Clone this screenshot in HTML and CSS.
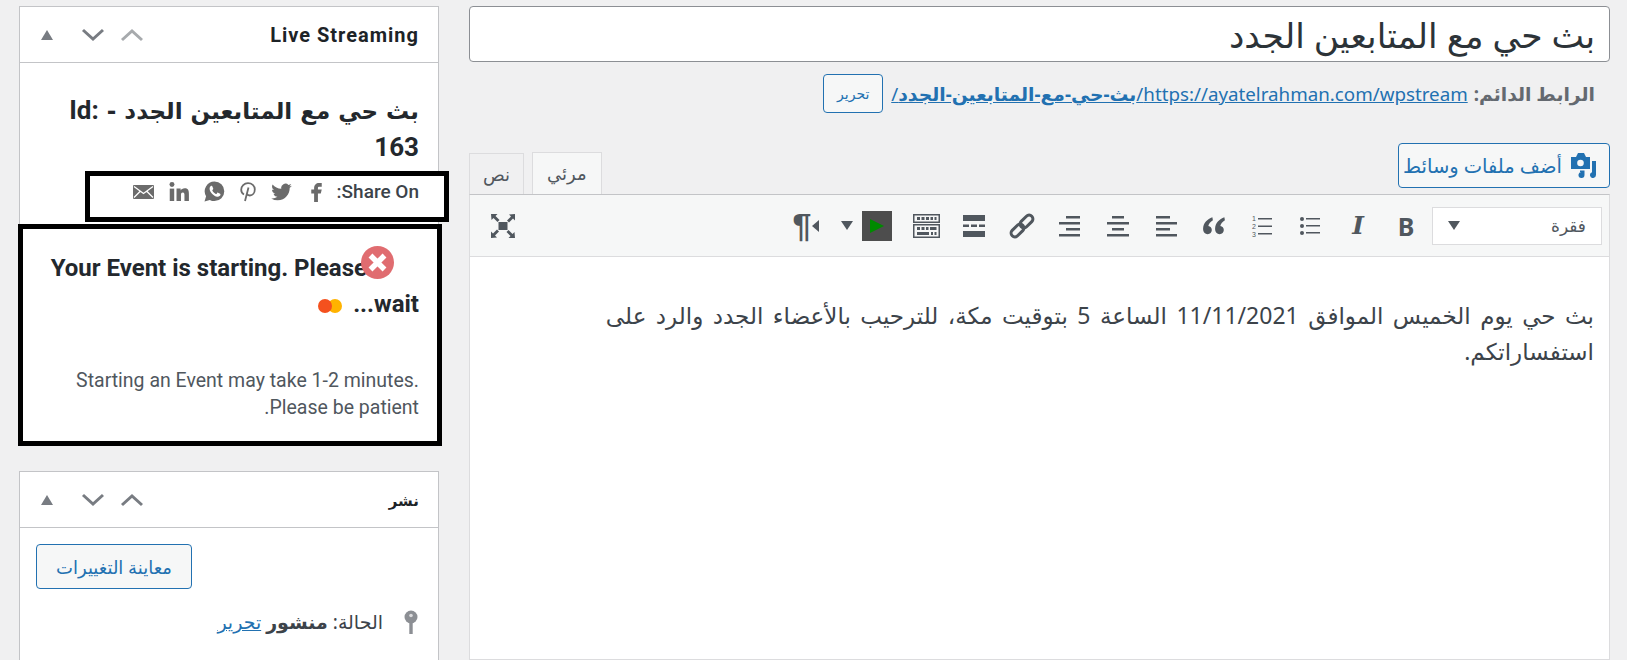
FILE: index.html
```html
<!DOCTYPE html>
<html lang="ar" dir="rtl">
<head>
    <meta charset="UTF-8">
    <title>تحرير البث</title>
    <link rel="stylesheet" href="styles.css">
</head>
<body>
<div class="page">
    <!-- Title, permalink and editor -->
    <main class="main">
        <input class="title-input" type="text" value="بث حي مع المتابعين الجدد">
        <div class="permalink">
            <strong>الرابط الدائم:</strong>
            <a href="#">https://ayatelrahman.com/wpstream/<b>بث-حي-مع-المتابعين-الجدد</b>/</a>
            <button class="btn btn-small">تحرير</button>
        </div>
        <div class="editor-top">
            <button class="btn btn-media">
                <svg width="25" height="25" viewBox="0 0 25 25"><path fill="currentColor" d="M0 4h5l2-4h6l2 4h4v12H0z"/><circle cx="9.500" cy="10" r="3.300" fill="#f6f7f7"/><path fill="currentColor" d="M21 8h4v14a3 3 0 1 1-4-2.800zM9 17.500h4.500v4.500a3 3 0 1 1-2.500-3H9z"/></svg>
                <span>أضف ملفات وسائط</span>
            </button>
            <div class="tabs">
                <div class="tab tab-active">مرئي</div>
                <div class="tab">نص</div>
            </div>
        </div>
        <div class="editor">
            <div class="toolbar">
                <div class="format-select"><span>فقرة</span><i class="caret"></i></div>
                <div class="tool tool-b">B</div>
                <div class="tool tool-i">I</div>
                <div class="tool"><svg width="22" height="22" viewBox="0 0 22 22"><circle cx="3" cy="4" r="2"/><circle cx="3" cy="11" r="2"/><circle cx="3" cy="18" r="2"/><rect x="7" y="3" width="14" height="1.500"/><rect x="7" y="10" width="14" height="1.500"/><rect x="7" y="17" width="14" height="1.500"/></svg></div>
                <div class="tool"><svg width="22" height="28" viewBox="0 0 22 28"><text x="1" y="9" class="num">1</text><text x="1" y="17" class="num">2</text><text x="1" y="25" class="num">3</text><rect x="7" y="6" width="14" height="1.500"/><rect x="7" y="13.500" width="14" height="1.500"/><rect x="7" y="21" width="14" height="1.500"/></svg></div>
                <div class="tool"><svg width="24" height="24" viewBox="0 0 22 22"><path d="M9.500 3C5 4.500 1 8.500 1 13.500c0 3 1.800 5 4.200 5 2.200 0 3.800-1.700 3.800-3.800 0-2-1.300-3.400-3.200-3.700.5-2 2-3.800 4.200-5.200zM20.500 3C16 4.500 12 8.500 12 13.500c0 3 1.800 5 4.200 5 2.200 0 3.800-1.700 3.800-3.800 0-2-1.300-3.400-3.200-3.700.5-2 2-3.800 4.200-5.200z"/></svg></div>
                <div class="tool"><svg width="22" height="22" viewBox="0 0 22 22"><rect x="1" y="1" width="14" height="2.500"/><rect x="1" y="7" width="21" height="2.500"/><rect x="1" y="13" width="14" height="2.500"/><rect x="1" y="19" width="21" height="2.500"/></svg></div>
                <div class="tool"><svg width="22" height="22" viewBox="0 0 22 22"><rect x="5" y="1" width="12" height="2.500"/><rect x="0" y="7" width="22" height="2.500"/><rect x="5" y="13" width="12" height="2.500"/><rect x="0" y="19" width="22" height="2.500"/></svg></div>
                <div class="tool"><svg width="22" height="22" viewBox="0 0 22 22"><rect x="7" y="1" width="14" height="2.500"/><rect x="0" y="7" width="21" height="2.500"/><rect x="7" y="13" width="14" height="2.500"/><rect x="0" y="19" width="21" height="2.500"/></svg></div>
                <div class="tool"><svg width="28" height="28" viewBox="0 0 28 28"><g fill="none" stroke="currentColor" stroke-width="3"><rect x="-7.500" y="-3.800" width="15" height="7.600" rx="3.800" transform="translate(9.500 18.500) rotate(-45)"/><rect x="-7.500" y="-3.800" width="15" height="7.600" rx="3.800" transform="translate(18.500 9.500) rotate(-45)"/></g></svg></div>
                <div class="tool"><svg width="22" height="24" viewBox="0 0 22 24"><rect y="1" width="22" height="6"/><rect y="10.500" width="6" height="2.500"/><rect x="8" y="10.500" width="6" height="2.500"/><rect x="16" y="10.500" width="6" height="2.500"/><rect y="17" width="22" height="6"/></svg></div>
                <div class="tool"><svg width="27" height="24" viewBox="0 0 27 24"><path fill-rule="evenodd" d="M0 0h27v9H0zM1.500 1.500v6h24v-6zM0 10h27v14H0zM1.500 11.500v11h24v-11z"/><path d="M4 3h3v3H4zM8.500 3h3v3h-3zM13 3h3v3h-3zM17.500 3h2.500v3h-2.500zM21.500 3h2v3h-2zM4 13h3v3H4zM8.500 13h3v3h-3zM13 13h2.500v3H13zM17 13h6.500v3H17zM4 18h12v3H4zM18 18h2v3h-2zM21.500 18h2v3h-2z"/></svg></div>
                <div class="tool-play"><svg width="14" height="14" viewBox="0 0 14 14"><path fill="#008a00" d="M0 0l14 7-14 7z"/></svg></div>
                <div class="tool-arrow"><i class="caret"></i></div>
                <div class="tool tool-para">
                    <span>¶</span><svg width="7" height="12" viewBox="0 0 7 12"><path d="M7 0v12L0 6z"/></svg>
                </div>
                <div class="tool tool-full"><svg width="24" height="24" viewBox="0 0 24 24"><rect x="7.500" y="8" width="9" height="8"/><path d="M0 0h6.500L4.500 2l4 4-2 2-4-4-2 2zM24 0v6.500l-2-2-4 4-2-2 4-4-2-2zM0 24v-6.500l2 2 4-4 2 2-4 4 2 2zM24 24h-6.500l2-2-4-4 2-2 4 4 2-2z"/></svg></div>
            </div>
            <div class="editor-body">
                <p>بث حي يوم الخميس الموافق 11/11/2021 الساعة 5 بتوقيت مكة، للترحيب بالأعضاء الجدد والرد على استفساراتكم.</p>
            </div>
        </div>
    </main>

    <!-- Side boxes -->
    <aside class="side">
        <section class="card">
            <header class="card-head">
                <h2 class="card-title card-title-latin">Live Streaming</h2>
                <div class="card-controls">
                    <svg class="chev chev-off" width="24" height="14" viewBox="0 0 24 14"><path d="M2 12l10-9 10 9" /></svg>
                    <svg class="chev" width="24" height="14" viewBox="0 0 24 14"><path d="M2 2l10 9 10-9" /></svg>
                    <i class="mini-tri"></i>
                </div>
            </header>
            <div class="live-body">
                <h3 class="live-title">بث حي مع المتابعين الجدد - <span class="live-id">Id:</span> <span class="live-id">163</span></h3>
                <div class="share-box">
                    <span class="share-label">Share On:</span>
                    <div class="share-icons">
                        <svg class="i-f" width="11" height="20" viewBox="6 3 11 21"><path d="M14 8h3V4h-3c-2.800 0-5 2.200-5 5v2H6v4h3v9h4v-9h3l1-4h-4V9c0-.6.4-1 1-1z"/></svg>
                        <svg class="i-tw" width="21" height="18" viewBox="0 1.500 24 21"><path d="M23.953 4.570a10 10 0 01-2.825.775 4.958 4.958 0 002.163-2.723c-.951.555-2.005.959-3.127 1.184a4.920 4.920 0 00-8.384 4.482C7.690 8.095 4.067 6.130 1.640 3.162a4.822 4.822 0 00-.666 2.475c0 1.710.870 3.213 2.188 4.096a4.904 4.904 0 01-2.228-.616v.060a4.923 4.923 0 003.946 4.827 4.996 4.996 0 01-2.212.085 4.936 4.936 0 004.604 3.417 9.867 9.867 0 01-6.102 2.105c-.390 0-.779-.023-1.170-.067a13.995 13.995 0 007.557 2.209c9.053 0 13.998-7.496 13.998-13.985 0-.210 0-.420-.015-.630A9.935 9.935 0 0024 4.590z"/></svg>
                        <svg class="i-pin" width="16" height="20" viewBox="0 0 16 20"><path fill="none" stroke="currentColor" stroke-width="1.800" d="M4 12.500C2 11.500 1.200 9.800 1.200 7.800 1.200 4 4.200 1.200 8 1.200s6.800 2.500 6.800 6c0 3.800-2.200 6.300-5 6.300-1.500 0-2.500-.8-2.800-1.800M8.500 5.500L5 19"/></svg>
                        <svg class="i-wa" width="21" height="21" viewBox="0 0 21 21"><path d="M10.500.5a9.800 9.800 0 0 1 0 19.600c-1.700 0-3.300-.4-4.700-1.200L.5 20.500l1.600-5.200A9.800 9.800 0 0 1 10.500.5z"/><path fill="#fff" d="M7.300 4.800c-.7.300-1.700 1.300-1.700 2.900 0 2.900 3.900 7.500 7.700 8 1.700.2 3-1 3.200-2 .1-.5-.1-.8-.4-1l-2-1c-.4-.2-.7 0-.9.300l-.7.900c-.2.200-.4.200-.7.100-1.500-.7-2.700-1.900-3.400-3.200-.1-.3-.1-.5.100-.7l.6-.8c.2-.2.200-.4.100-.7l-.8-2.100c-.2-.6-.6-.8-1.100-.7z"/></svg>
                        <svg class="i-in" width="20" height="19" viewBox="0 0 24 23"><circle cx="3.500" cy="3" r="3"/><rect x=".8" y="8" width="5.400" height="15"/><path d="M9 8h5v2.200C14.800 8.800 16.500 7.600 19 7.600c4.500 0 5 3.300 5 7.400v8h-5.400v-7c0-1.700 0-3.400-2-3.400s-2.200 1.600-2.200 3.400v7H9z"/></svg>
                        <svg class="i-mail" width="21" height="14" viewBox="0 0 21 14"><rect width="21" height="14" rx="1"/><path fill="none" stroke="#fff" stroke-width="1.300" d="M1 1.500l9.500 7 9.500-7M1 12.500l6.500-6.500M20 12.500L13.500 6"/></svg>
                    </div>
                </div>
                <div class="event-box">
                    <svg class="event-close" width="33" height="33" viewBox="0 0 33 33"><circle cx="16.500" cy="16.500" r="16.500" fill="#e06c70"/><path fill="none" stroke="#fff" stroke-width="5.500" d="M9.500 9.500l14 14M23.500 9.500l-14 14"/></svg>
                    <h3 class="event-title">Your Event is starting. Please wait...<span class="dots"><i class="dot dot-yellow"></i><i class="dot dot-red"></i></span></h3>
                    <p class="event-note">Starting an Event may take 1-2 minutes. Please be patient.</p>
                </div>
            </div>
        </section>

        <section class="card card-publish">
            <header class="card-head">
                <h2 class="card-title">نشر</h2>
                <div class="card-controls">
                    <svg class="chev" width="24" height="14" viewBox="0 0 24 14"><path d="M2 12l10-9 10 9" /></svg>
                    <svg class="chev" width="24" height="14" viewBox="0 0 24 14"><path d="M2 2l10 9 10-9" /></svg>
                    <i class="mini-tri"></i>
                </div>
            </header>
            <div class="publish-body">
                <button class="btn btn-preview">معاينة التغييرات</button>
                <div class="status-row">
                    <svg width="14" height="24" viewBox="0 0 14 24"><circle cx="7" cy="7" r="6.500" fill="#8c8f94"/><circle cx="7" cy="5.500" r="1.800" fill="#dcdcde"/><rect x="5.300" y="12" width="3.400" height="12" fill="#8c8f94"/></svg>
                    <span>الحالة: <strong>منشور</strong> <a href="#">تحرير</a></span>
                </div>
            </div>
        </section>
    </aside>
</div>
</body>
</html>
```

FILE: styles.css
```css
html, body {
    margin: 0;
    height: 660px;
    overflow: hidden;
}
body {
    background: #f0f0f1;
    color: #3c434a;
    font-family: "Noto Sans", "DejaVu Sans", sans-serif;
    font-size: 14px;
}
h2, h3, p {
    margin: 0;
}
a {
    color: #2271b1;
}
.page {
    display: flex;
    gap: 30px;
    padding: 6px 17px 0 19px;
    height: 654px;
}

/* main column */
.main {
    width: 1141px;
    display: flex;
    flex-direction: column;
}
.title-input {
    height: 56px;
    box-sizing: border-box;
    width: 100%;
    border: 1px solid #8c8f94;
    border-radius: 4px;
    background: #fff;
    padding: 0 14px;
    font: 34.500px "Noto Sans", "DejaVu Sans", sans-serif;
    color: #2c3338;
}
.permalink {
    display: flex;
    align-items: center;
    gap: 6px;
    height: 39px;
    margin-top: 12px;
    padding-right: 15px;
    font-size: 18.750px;
    color: #646970;
}
.btn {
    border: 1px solid #2271b1;
    border-radius: 4px;
    background: #f6f7f7;
    color: #2271b1;
    font-family: "Noto Sans", "DejaVu Sans", sans-serif;
    padding: 0;
    box-sizing: border-box;
}
.btn-small {
    width: 60px;
    height: 39px;
    font-size: 14px;
    margin-right: 2px;
}
.editor-top {
    display: flex;
    justify-content: space-between;
    height: 52px;
    margin-top: 30px;
    margin-bottom: -1px;
}
.btn-media {
    width: 212px;
    height: 45px;
    display: flex;
    align-items: center;
    gap: 9px;
    padding-right: 13px;
    font-size: 19.500px;
    white-space: nowrap;
}
.tabs {
    display: flex;
    align-items: flex-end;
    gap: 8px;
}
.tab {
    height: 42px;
    box-sizing: border-box;
    border: 1px solid #dcdcde;
    background: #f0f0f1;
    padding: 0 13px;
    font-size: 18px;
    line-height: 40px;
    color: #50575e;
}
.tab-active {
    height: 43px;
    padding: 0 14px;
    background: #f6f7f7;
    border-bottom-color: #f6f7f7;
}
.editor {
    flex: 1;
    display: flex;
    flex-direction: column;
    border: 1px solid #dcdcde;
    border-top: 1px solid #c3c4c7;
}
.toolbar {
    display: flex;
    align-items: center;
    height: 61px;
    padding: 0 7px 0 9px;
    background: #f6f7f7;
    border-bottom: 1px solid #dcdcde;
    color: #50575e;
    fill: #50575e;
}
.format-select {
    width: 170px;
    height: 38px;
    box-sizing: border-box;
    display: flex;
    align-items: center;
    justify-content: space-between;
    padding: 0 15px;
    margin-left: 2px;
    background: #fff;
    border: 1px solid #dcdcde;
    font-size: 17px;
}
.caret {
    width: 0;
    height: 0;
    border: 6px solid transparent;
    border-top: 9px solid #50575e;
    border-bottom: 0;
}
.tool {
    width: 48px;
    height: 30px;
    display: flex;
    align-items: center;
    justify-content: center;
}
.tool-b {
    font: bold 25px "Noto Sans", sans-serif;
}
.tool-i {
    font: italic bold 25px "DejaVu Serif", serif;
}
.num {
    font: 7px "Liberation Sans", sans-serif;
    direction: ltr;
}
.tool-play {
    width: 30px;
    height: 30px;
    margin-right: 10px;
    background: #4d4d4d;
    display: flex;
    align-items: center;
    justify-content: center;
}
.tool-arrow {
    width: 30px;
    display: flex;
    justify-content: center;
}
.tool-para {
    width: 52px;
    gap: 1px;
    direction: ltr;
}
.tool-para span {
    font: bold 34px "Liberation Sans", sans-serif;
}
.tool-full {
    margin-right: auto;
}
.editor-body {
    flex: 1;
    background: #fff;
    padding: 40px 15px 0 15px;
    font-size: 23px;
    line-height: 36px;
    word-spacing: 3.500px;
    color: #3c434a;
}
.editor-body p {
    max-width: 1000px;
}

/* side boxes */
.side {
    width: 420px;
    flex: none;
}
.card {
    background: #fff;
    border: 1px solid #c3c4c7;
}
.card-publish {
    margin-top: 30px;
    height: 189px;
    box-sizing: border-box;
    border-bottom: 0;
    overflow: hidden;
}
.card-head {
    display: flex;
    align-items: center;
    justify-content: space-between;
    height: 55px;
    border-bottom: 1px solid #c3c4c7;
    padding: 0 19px 0 21px;
}
.card-title {
    font-size: 15px;
    font-weight: bold;
    color: #1d2327;
}
.card-title-latin {
    font-family: Roboto, sans-serif;
    font-size: 20px;
    letter-spacing: 1px;
}
.card-controls {
    display: flex;
    align-items: center;
    gap: 15px;
}
.chev {
    fill: none;
    stroke: #787c82;
    stroke-width: 3;
}
.chev-off {
    stroke: #a7aaad;
}
.mini-tri {
    width: 0;
    height: 0;
    margin-right: 13px;
    border: 6.500px solid transparent;
    border-bottom: 10px solid #787c82;
    border-top: 0;
}
.live-body {
    display: flex;
    flex-direction: column;
    padding-top: 29px;
}
.live-title {
    font: 700 23px/36px "DejaVu Sans", sans-serif;
    height: 72px;
    padding: 0 19px 0 30px;
    color: #23282d;
}
.live-id {
    font: 700 26px/36px Roboto, sans-serif;
}
.share-box {
    width: 364px;
    height: 51px;
    box-sizing: border-box;
    margin: 7px -11px 2px 0;
    border: 5px solid #000;
    display: flex;
    gap: 15px;
    padding: 0 25px 10px 0;
    align-items: center;
    font: 500 19px Roboto, sans-serif;
    background: #fff;
}
.share-icons {
    display: flex;
    align-items: center;
    gap: 15px;
    color: #6b6b6b;
    fill: #6b6b6b;
}
.i-tw { margin-right: 4px; }
.event-box {
    position: relative;
    margin: 0 -4px -6px -2px;
    border: 5px solid #000;
    background: #fff;
    padding: 21px 18px 20px 20px;
    box-sizing: border-box;
    height: 222px;
}
.event-close {
    position: absolute;
    top: 17px;
    left: 338px;
}
.event-title {
    font: 700 24px/36px Roboto, sans-serif;
    color: #23282d;
    text-indent: 52px;
}
.dots {
    display: inline-flex;
    margin-right: 11px;
    vertical-align: -1px;
}
.dot {
    width: 14px;
    height: 14px;
    border-radius: 50%;
}
.dot-red {
    background: #f4511e;
    margin-right: -4px;
}
.dot-yellow {
    background: #ffb300;
}
.event-note {
    margin-top: 45px;
    font: 19.500px/27px Roboto, sans-serif;
    color: #50575e;
}
.publish-body {
    display: flex;
    flex-direction: column;
    padding: 16px 15px 16px 16px;
}
.btn-preview {
    width: 156px;
    height: 45px;
    align-self: flex-end;
    font-size: 18px;
}
.status-row {
    display: flex;
    align-items: center;
    gap: 21px;
    margin-top: 20px;
    padding-right: 5px;
    font-size: 19px;
}
```
